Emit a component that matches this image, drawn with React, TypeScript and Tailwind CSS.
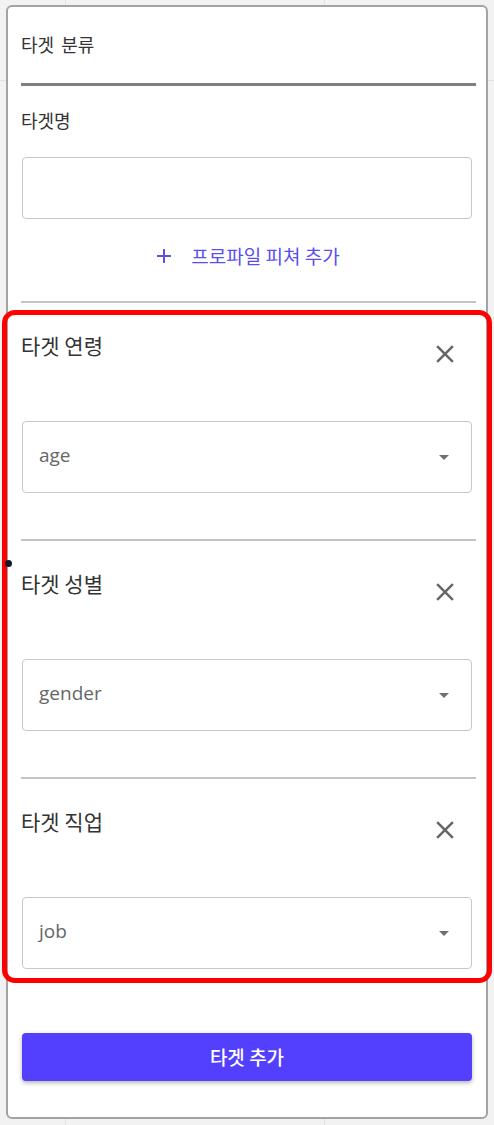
import React from "react";

const KR = "font-[family-name:'Noto_Sans_CJK_KR',sans-serif]";

const CloseIcon = () => (
  <svg viewBox="0 0 24 24" width="30" height="30" fill="#666666">
    <path d="M19 6.41 17.59 5 12 10.59 6.41 5 5 6.41 10.59 12 5 17.59 6.41 19 12 13.41 17.59 19 19 17.59 13.41 12z" />
  </svg>
);

const DropIcon = () => (
  <svg viewBox="0 0 24 24" width="24" height="24" fill="#707070">
    <path d="M7 10l5 5 5-5z" />
  </svg>
);

const Section = ({ title, value, last }: { title: string; value: string; last?: boolean }) => (
  <div className="flex flex-col">
    <div className="w-[455px] h-[2px] bg-[#c4c4c4]" />
    <div className="flex justify-between w-[450px] mt-[30px] h-[24px]">
      <span className={`${KR} text-[21px] leading-[24px] text-[#333333]`}>{title}</span>
      <div className="mt-[6px] mr-[11px] w-[30px] h-[30px] flex items-center justify-center">
        <CloseIcon />
      </div>
    </div>
    <div className="mt-[64px] ml-[1px] w-[450px] h-[72px] border border-[#c8c8c8] rounded-[4px] flex items-center justify-between pl-[16px] pr-[15px]">
      <span className="font-[family-name:'Open_Sans',sans-serif] text-[19px] leading-[24px] text-[#666666] -mt-[5px]">{value}</span>
      <DropIcon />
    </div>
    {!last && <div className="h-[46px]" />}
  </div>
);

export default function App() {
  return (
    <div className="relative w-[494px] h-[1125px] overflow-hidden bg-[#f2f2f2] pt-[5px] pl-[6px] font-[family-name:'Noto_Sans_CJK_KR',sans-serif]">
      <div className="absolute left-[65px] top-0 w-px h-full bg-[#e2e2e2]" />
      <div className="absolute left-[324px] top-0 w-px h-full bg-[#e2e2e2]" />
      <div className="absolute left-0 top-[80px] w-full h-px bg-[#e2e2e2]" />
      <div className="relative w-[482px] h-[1114px] border-2 border-[#a3a3a3] rounded-[6px] bg-white pl-[13px] pt-[25px] flex flex-col">
        <span className={`${KR} text-[18px] leading-[24px] text-[#333333] [word-spacing:3px]`}>타겟 분류</span>
        <div className="mt-[27px] w-[455px] h-[3px] bg-[#808080]" />
        <span className={`${KR} mt-[22px] text-[18px] leading-[24px] text-[#333333]`}>타겟명</span>
        <div className="mt-[25px] ml-[1px] w-[450px] h-[62px] border border-[#c8c8c8] rounded-[4px]" />
        <div className="mt-[25px] w-[450px] h-[24px] flex items-center justify-center gap-[15px] text-[#5b4df2]">
          <svg viewBox="0 0 24 24" width="24" height="24" fill="#5b4df2">
            <path d="M19 13h-6v6h-2v-6H5v-2h6V5h2v6h6v2z" />
          </svg>
          <span className={`${KR} text-[19px] leading-[24px]`}>프로파일 피쳐 추가</span>
        </div>
        <div className="mt-[33px]">
          <Section title="타겟 연령" value="age" />
          <Section title="타겟 성별" value="gender" />
          <Section title="타겟 직업" value="job" last />
        </div>
        <button className={`${KR} mt-[64px] ml-[1px] w-[450px] h-[48px] rounded-[4px] bg-[#5340ff] text-white text-[19px] font-medium shadow-[0_2px_4px_rgba(0,0,0,0.3)]`}>
          타겟 추가
        </button>
      </div>
      <div className="absolute left-[2px] top-[310px] w-[490px] h-[673px] border-[5px] border-[#ff0000] rounded-[13px] pointer-events-none" />
      <div className="absolute left-[5px] top-[560px] w-[7px] h-[7px] rounded-full bg-[#111827]" />
    </div>
  );
}
